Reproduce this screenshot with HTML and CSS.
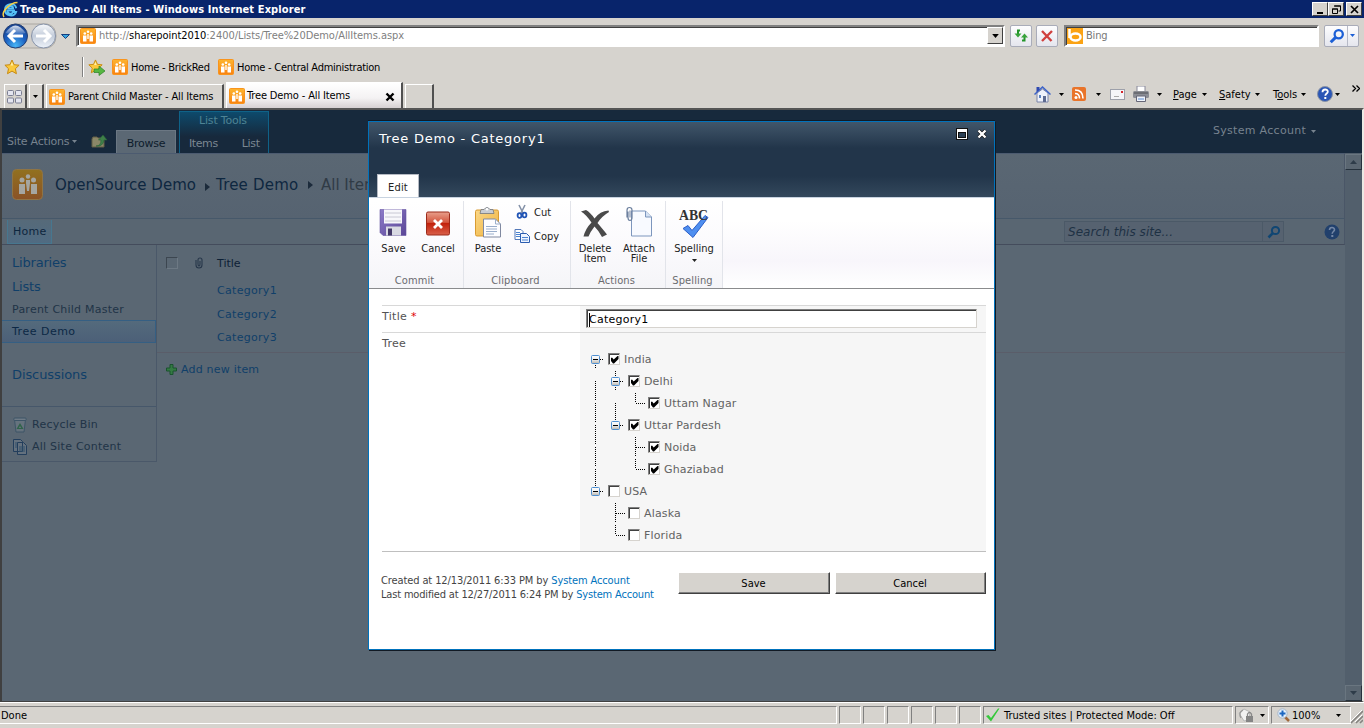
FILE: index.html
```html
<!DOCTYPE html>
<html lang="en">
<head>
<meta charset="utf-8">
<title>Tree Demo - All Items - Windows Internet Explorer</title>
<link rel="stylesheet" href="styles.css">
</head>
<body>
<svg class="defs" width="0" height="0" aria-hidden="true">
  <defs>
    <linearGradient id="orange" x1="0" y1="0" x2="0" y2="1"><stop offset="0" stop-color="#fdb52f"/><stop offset="1" stop-color="#f98210"/></linearGradient>
    <radialGradient id="blueBall" cx=".5" cy=".9" r=".9"><stop offset="0" stop-color="#48b5f5"/><stop offset=".5" stop-color="#1b5fc0"/><stop offset="1" stop-color="#16408e"/></radialGradient>
    <linearGradient id="gloss" x1="0" y1="0" x2="0" y2="1"><stop offset="0" stop-color="#fff" stop-opacity=".85"/><stop offset="1" stop-color="#fff" stop-opacity=".1"/></linearGradient>
    <linearGradient id="greyBall" x1="0" y1="0" x2="0" y2="1"><stop offset="0" stop-color="#f7f9fc"/><stop offset=".5" stop-color="#c3ccda"/><stop offset="1" stop-color="#eef3fa"/></linearGradient>
    <linearGradient id="floppy" x1="0" y1="0" x2="1" y2="1"><stop offset="0" stop-color="#8d7cc9"/><stop offset="1" stop-color="#5a4596"/></linearGradient>
    <linearGradient id="red" x1="0" y1="0" x2="0" y2="1"><stop offset="0" stop-color="#e8a08c"/><stop offset=".45" stop-color="#d4563f"/><stop offset=".5" stop-color="#c2210c"/><stop offset="1" stop-color="#d9604a"/></linearGradient>
    <linearGradient id="board" x1="0" y1="0" x2="1" y2="1"><stop offset="0" stop-color="#fbd888"/><stop offset="1" stop-color="#eeb23e"/></linearGradient>
    <linearGradient id="node" x1="0" y1="0" x2="0" y2="1"><stop offset="0" stop-color="#fff"/><stop offset=".5" stop-color="#eee"/><stop offset="1" stop-color="#b9b5ad"/></linearGradient>
    <symbol id="sp" viewBox="0 0 16 16">
      <rect x=".5" y=".5" width="15" height="15" rx="1" fill="url(#orange)" stroke="#f9941c"/>
      <g fill="#fff"><circle cx="8" cy="3.800" r="1.300"/><circle cx="4.800" cy="5.500" r="1.300"/><circle cx="11.200" cy="5.500" r="1.300"/><path d="M3 7.500h3.500v6H3zM9.500 7.500H13v6H9.500zM7.300 6h1.400v5H7.300z"/></g>
    </symbol>
    <symbol id="star" viewBox="0 0 16 16"><path d="M8 1l2.100 4.700 5 .5-3.700 3.500 1 5L8 12.100l-4.500 2.600 1-5L.9 6.200l5-.5z" fill="#fbc93c" stroke="#c88a10"/><path d="M8 3l1.200 3.500H6.500z" fill="#fff0a8"/></symbol>
    <symbol id="down" viewBox="0 0 5 3"><path d="M0 0h5L2.500 3z" fill="currentColor"/></symbol>
    <symbol id="cross" viewBox="0 0 10 10"><path d="M1.500 1.500l7 7M8.500 1.500l-7 7" stroke="currentColor" stroke-width="2.400"/></symbol>
    <symbol id="lens" viewBox="0 0 14 14"><circle cx="8.500" cy="5.500" r="3.600" fill="none" stroke="currentColor" stroke-width="2"/><path d="M5.800 8.200L1.500 12.500" stroke="currentColor" stroke-width="2.600"/></symbol>
    <symbol id="help" viewBox="0 0 16 16"><circle cx="8" cy="8" r="7.500" fill="#2b56b5" stroke="#8a93a5"/><path d="M5.500 6.200c0-3.600 5.300-3.400 5.300-.5 0 1.800-2.500 1.900-2.500 4" fill="none" stroke="#fff" stroke-width="1.800"/><rect x="7.300" y="11" width="2" height="2" fill="#fff"/></symbol>
    <symbol id="check" viewBox="0 0 8 8"><path d="M0 2l1-.5L2.700 3.500 6.500 0H7.500v3L3 7.500H2L0 5z" fill="#000"/></symbol>
    <symbol id="toggle" viewBox="0 0 20 22" overflow="visible"><path d="M14 11.500h4" class="dots"/><rect x="5.500" y="7.500" width="8" height="8" rx="1" fill="url(#node)" stroke="#4f8fd0"/><path d="M7 11.500h5" stroke="#000"/></symbol>
    <symbol id="tail" viewBox="0 0 20 22" overflow="visible"><path d="M9.500 17v4" class="dots"/></symbol>
    <symbol id="head" viewBox="0 0 20 22" overflow="visible"><path d="M9.500 1v6" class="dots"/></symbol>
    <symbol id="line" viewBox="0 0 20 22" overflow="visible"><path d="M9.500 11v19" class="dots"/></symbol>
    <symbol id="elbow" viewBox="0 0 20 22" overflow="visible"><path d="M9.500 1v10M10 11.500h9" class="dots"/></symbol>
    <symbol id="tee" viewBox="0 0 20 22" overflow="visible"><path d="M9.500 1v19M10 11.500h9" class="dots"/></symbol>
  </defs>
</svg>

<div class="window">
  <header class="titlebar">
    <svg class="ie" width="17" height="17" viewBox="0 0 17 17"><path d="M13 9.500H5.300c.3 3.800 4.500 4.300 5.800 1.500h3C12.500 16.200 2.800 15.600 3 8.500 3.200 2.200 13 1 14.200 7.200M5.400 7.400h5.700C11 4.200 5.700 4.400 5.400 7.400" fill="none" stroke="#56c0f7" stroke-width="1.900"/><path d="M2 16C-1.500 11 8 1.500 15.500 1.500" fill="none" stroke="#f8cf45" stroke-width="1.500"/></svg>
    <span class="caption">Tree Demo - All Items - Windows Internet Explorer</span>
    <span class="winbtns">
      <i class="winbtn"><svg width="9" height="9"><path d="M1 7h6v2H1z"/></svg></i><i class="winbtn"><svg width="10" height="9"><path d="M3.500 1h6v5h-2M3 1h7M1.500 4h5v4.500h-5zM1 4h6" fill="none" stroke="#000"/></svg></i><i class="winbtn close"><svg width="9" height="9"><path d="M1 1l7 7M8 1L1 8" stroke="#000" stroke-width="1.700"/></svg></i>
    </span>
  </header>

  <div class="addressbar">
    <svg class="nav" width="74" height="30" viewBox="0 0 74 30">
      <path d="M14 3h33q9 2 9 12t-9 12H14z" fill="#d2cfca" stroke="#aaa7a2"/>
      <circle cx="15.500" cy="15" r="12" fill="url(#blueBall)" stroke="#243f73"/><path d="M5.500 12Q15.500-3 25.500 12 15.500 15 5.500 12" fill="url(#gloss)"/>
      <path d="M15 9l-6 6 6 6M9.500 15H23" fill="none" stroke="#fff" stroke-width="3"/>
      <circle cx="43.500" cy="15" r="12" fill="url(#greyBall)" stroke="#8692a8"/><path d="M44 9l6 6-6 6M49.500 15H36" fill="none" stroke="#fff" stroke-width="3"/>
      <path d="M61.500 13.500h8l-4 4z" fill="#37a5e0" stroke="#153f80"/>
    </svg>
    <div class="field url"><svg width="16" height="16"><use href="#sp"/></svg><span class="ui urltext">http://<b>sharepoint2010</b>:2400/Lists/Tree%20Demo/AllItems.aspx</span><i class="dropbtn"><svg width="7" height="4"><use href="#down"/></svg></i></div>
    <i class="toolbtn"><svg width="16" height="16" viewBox="0 0 16 16"><path d="M7 2.500H5V6M9 12.500h2.500V9" stroke="#23952a" stroke-width="2" fill="none"/><path d="M1.500 5.500h7L5 9.500zM8 9.500h7l-3.500-4z" fill="#38a33c"/></svg></i>
    <i class="toolbtn stop"><svg width="14" height="14" viewBox="0 0 14 14"><path d="M2 2l9.500 10M12 2L2 12" stroke="#d0403e" stroke-width="2.400"/></svg></i>
    <div class="field bing"><svg width="16" height="16" viewBox="0 0 16 16"><path d="M0 0h16v16H0z" fill="#fba314"/><path d="M2.500 1v9" stroke="#fff" stroke-width="2.500"/><ellipse cx="8.500" cy="9" rx="5" ry="3.500" fill="none" stroke="#fff" stroke-width="2.500"/></svg><span class="ui">Bing</span></div>
    <i class="toolbtn go"><svg width="16" height="16"><use href="#lens"/></svg><b></b><svg width="5" height="3"><use href="#down"/></svg></i>
  </div>

  <div class="favbar ui">
    <svg width="16" height="16"><use href="#star"/></svg><span class="fav">Favorites</span><i class="sep"></i>
    <svg class="star2" width="18" height="17" viewBox="0 0 18 17"><use href="#star" width="15" height="15"/><path d="M6 10h5V7l6 5-6 4.500v-3H6z" fill="#57b742" stroke="#2d8126" stroke-width=".7"/></svg>
    <svg width="16" height="16"><use href="#sp"/></svg><span class="bk1">Home - BrickRed</span>
    <svg width="16" height="16"><use href="#sp"/></svg><span class="bk2">Home - Central Administration</span>
  </div>

  <div class="tabrow ui">
    <i class="tab quick"><svg width="16" height="14" viewBox="0 0 16 14"><g fill="#e4e5f0" stroke="#7b7e93"><rect x=".5" y=".5" width="6" height="5" rx="1"/><rect x="8.500" y=".5" width="6" height="5" rx="1"/><rect x=".5" y="8" width="6" height="5" rx="1"/><rect x="8.500" y="8" width="6" height="5" rx="1"/></g></svg></i>
    <i class="tab qdrop"><svg width="5" height="3"><use href="#down"/></svg></i>
    <div class="tab tab1"><svg width="16" height="16"><use href="#sp"/></svg><span>Parent Child Master - All Items</span></div>
    <div class="tab tab2"><svg width="16" height="16"><use href="#sp"/></svg><span>Tree Demo - All Items</span><svg class="tabclose" width="10" height="10"><use href="#cross"/></svg></div>
    <i class="tab newtab"></i>
    <div class="cmds">
      <svg width="17" height="17" viewBox="0 0 17 17"><path d="M3 7v9h11V7L8.500 3z" fill="#eef1fa" stroke="#7b84a8"/><path d="M.5 8.500L8.500 1l8 7.500" fill="none" stroke="#3d63c8" stroke-width="1.500"/><path d="M2.500 1h3v3l-3 2z" fill="#2f49b0"/><path d="M9 10h3v6H9z" fill="#5d6a90"/><path d="M5 9h2v3H5z" fill="#5b83c0"/></svg>
      <svg class="dd" width="5" height="3"><use href="#down"/></svg>
      <svg class="rss" width="14" height="14" viewBox="0 0 14 14"><rect width="14" height="14" rx="2" fill="#e9742a"/><circle cx="4" cy="10.500" r="1.500" fill="#fff"/><path d="M3 6.500q4.500 0 4.500 5M3 3q8 0 8 8.500" fill="none" stroke="#fff" stroke-width="1.600"/></svg>
      <svg class="dd2" width="5" height="3"><use href="#down"/></svg>
      <svg class="mail" width="15" height="11" viewBox="0 0 15 11"><rect x=".5" y=".5" width="14" height="10" fill="#f5f5f8" stroke="#9da0aa"/><rect x="11" y="2" width="2" height="2" fill="#d6252b"/><path d="M4 7.500h5" stroke="#aaa"/></svg>
      <svg class="print" width="16" height="16" viewBox="0 0 16 16"><path d="M4 0h8v6H4z" fill="#fff" stroke="#889"/><rect y="5" width="16" height="7" rx="1.500" fill="#8b8d94"/><path d="M1 7h14" stroke="#4c4e55"/><path d="M3.500 10h9v5.500h-9z" fill="#eef3fb" stroke="#667"/><path d="M5 13h6" stroke="#5b8ad0"/></svg>
      <svg class="dd3" width="5" height="3"><use href="#down"/></svg>
      <span class="page"><u>P</u>age</span><svg class="dd4" width="5" height="3"><use href="#down"/></svg>
      <span class="safety"><u>S</u>afety</span><svg class="dd4" width="5" height="3"><use href="#down"/></svg>
      <span class="tools">T<u>o</u>ols</span><svg class="dd4" width="5" height="3"><use href="#down"/></svg>
      <svg class="helpi" width="16" height="16"><use href="#help"/></svg><svg class="dd5" width="5" height="3"><use href="#down"/></svg>
      <svg class="more" width="8" height="7" viewBox="0 0 8 7"><path d="M.5.500l3 3-3 3M4.500.500l3 3-3 3" fill="none" stroke="#000" stroke-width="1.300"/></svg>
    </div>
  </div>

  <main class="viewport">
    <div class="ribbon">
      <span class="siteact">Site Actions</span><svg class="sadrop" width="5" height="3"><use href="#down"/></svg>
      <svg class="folder" width="17" height="15" viewBox="0 0 17 15"><path d="M1 5l1-2h4l1 1h6v9H1z" fill="#8b8768" stroke="#635f45"/><path d="M5 12q5 0 5-6H7.500L12 1l4 5h-3q-1 7-8 6" fill="#3f8049" stroke="#275f38" stroke-width=".6"/></svg>
      <div class="browse">Browse</div>
      <div class="listtools"><div class="lt">List Tools</div><div class="ltabs"><span>Items</span><span class="l2">List</span></div></div>
      <div class="account">System Account <svg width="5" height="3"><use href="#down"/></svg></div>
    </div>
    <div class="below">
      <div class="sheet">
        <div class="crumbs">
          <svg class="logo" width="31" height="31" viewBox="0 0 31 31"><rect x=".5" y=".5" width="30" height="30" rx="4" fill="url(#logoFill)" stroke="#8f7445"/><defs><linearGradient id="logoFill" x1="0" y1="0" x2="0" y2="1"><stop offset="0" stop-color="#92711f"/><stop offset="1" stop-color="#8a5226"/></linearGradient></defs><g fill="#a5a6a1"><circle cx="16" cy="7.500" r="2.200"/><circle cx="10" cy="11" r="2.500"/><circle cx="21.500" cy="11" r="2.500"/><path d="M7 15h6v10H7zM19 15h6v10h-6zM14 11h4v3l-1 8h-2l-1-8z"/></g></svg>
          <span class="c1">OpenSource Demo</span><i class="arr"></i><span class="c2">Tree Demo</span><i class="arr a2"></i><span class="c3">All Items</span>
        </div>
        <div class="topnav"><span class="home">Home</span>
          <div class="search"><em>Search this site...</em><i><svg width="14" height="14"><use href="#lens"/></svg></i></div>
          <svg class="sphelp" width="16" height="16" viewBox="0 0 16 16"><circle cx="8" cy="8" r="7.500" fill="#21406c"/><path d="M5.500 6c0-3.400 5-3.200 5-.3 0 1.700-2.300 1.900-2.300 4" fill="none" stroke="#7487a5" stroke-width="1.600"/><rect x="7.300" y="11" width="2" height="2" fill="#7487a5"/></svg>
        </div>
        <div class="content">
          <nav class="side">
            <span class="big">Libraries</span><span class="big">Lists</span><span class="sub s1">Parent Child Master</span><span class="sub sel">Tree Demo</span><span class="big disc">Discussions</span>
            <div class="bin">
              <span><svg width="14" height="16" viewBox="0 0 14 16"><path d="M1.500 2.500h11l-1.500 12.500h-8z" fill="#66737e" stroke="#3d5567"/><rect x=".8" y="1" width="12.400" height="2.500" rx="1" fill="#6f7b86" stroke="#3d5567"/><path d="M7 6l3.500 6h-7z" fill="#2f6349"/><path d="M7 9l1.300 2H5.700z" fill="#66737e"/></svg><b class="rb">Recycle Bin</b></span>
              <span><svg width="14" height="16" viewBox="0 0 14 16"><path d="M.5.500h7l2 2v10h-9zM4.500 3.500h6l3 3v9h-9z" fill="#64717e" stroke="#233e5c"/><path d="M6 8h6M6 10h6M6 12h6M2 4h2M2 6h2M2 8h2" stroke="#30506b"/></svg><b>All Site Content</b></span>
            </div>
          </nav>
          <section class="list">
            <div class="lhead"><i class="cb"></i><svg width="8" height="12" viewBox="0 0 8 12"><path d="M1 3v5q0 3 3 3t3-3V3q0-2-2-2T3 3v4q0 2 1 2t1-2V4" fill="none" stroke="#27374a" stroke-width="1.100"/></svg><span>Title</span></div>
            <div class="item">Category1</div><div class="item">Category2</div><div class="item">Category3</div>
            <div class="add"><svg width="11" height="11" viewBox="0 0 11 11"><path d="M4 .5h3V4h3.500v3H7v3.500H4V7H.5V4H4z" fill="#337a42" stroke="#1a532f"/></svg><span>Add new item</span></div>
          </section>
        </div>
      </div>
      <div class="scroll"><i><svg width="7" height="4" viewBox="0 0 7 4"><path d="M0 4h7L3.500 0z" fill="#2e3c49"/></svg></i><i><svg width="7" height="4" viewBox="0 0 7 4"><path d="M0 0h7L3.500 4z" fill="#2e3c49"/></svg></i></div>
    </div>
  </main>

  <footer class="status ui">
    <span class="cell done">Done</span><i class="cell sm"></i><i class="cell sm"></i><i class="cell sm"></i><i class="cell sm"></i><i class="cell sm"></i><i class="cell sm"></i>
    <span class="cell trusted"><svg width="15" height="14" viewBox="0 0 15 14"><path d="M1 8l2.500-1L6 10l7-9.500h1.500L6 13.500z" fill="#35c83a"/></svg><span>Trusted sites | Protected Mode: Off</span></span>
    <span class="cell lock"><svg width="16" height="15" viewBox="0 0 16 15"><path d="M1 5l5-4 6 3-1 8-5 1z" fill="#f2f2f2" stroke="#b6b6b6"/><path d="M5 2q-5 3-2 8" fill="none" stroke="#999" stroke-width="1.300"/><path d="M9.500 8V6q2-3 4 0v2" fill="none" stroke="#888" stroke-width="1.300"/><rect x="8" y="8" width="7" height="6" fill="#858585"/></svg><svg width="5" height="3"><use href="#down"/></svg></span>
    <span class="cell zoom"><svg width="13" height="14" viewBox="0 0 13 14"><path d="M8 9l4 4" stroke="#a0673a" stroke-width="2.500"/><circle cx="5.500" cy="5.500" r="4.700" fill="#e3effb" stroke="#a5b5c9"/><path d="M5.500 2.500v6M2.500 5.500h6" stroke="#1c66c0" stroke-width="2"/></svg><span>100%</span><svg class="zd" width="5" height="3"><use href="#down"/></svg></span>
    <svg class="grip" width="14" height="16" viewBox="0 0 14 16"><path d="M2 15L14 3M7 15l7-7M11 15l3-3" stroke="#858380" stroke-width="1.600"/><path d="M1 14L13 2M6 14l7-7" stroke="#fff"/></svg>
  </footer>
</div>

<div class="dialog">
  <div class="dhead">
    <div class="dtitle"><span>Tree Demo - Category1</span><svg class="max" width="12" height="12" viewBox="0 0 12 12"><rect x=".5" y=".5" width="11" height="11" fill="#fff" stroke="#111"/><rect x="2.500" y="4.500" width="7" height="5" fill="#2c4156" stroke="#111"/></svg><svg class="x" width="10" height="10" viewBox="0 0 10 10"><path d="M1.500 1.500l7 7M8.500 1.500l-7 7" stroke="#111" stroke-width="3.600"/><path d="M1.500 1.500l7 7M8.500 1.500l-7 7" stroke="#fff" stroke-width="2.400"/></svg></div>
    <div class="edit ui">Edit</div>
  </div>
  <div class="dribbon ui">
    <div class="group g1"><div class="btns">
      <div class="lb b1"><svg width="28" height="30" viewBox="0 0 28 30"><path d="M1 2h26v26H4l-3-3z" fill="url(#floppy)" stroke="#6754a3" stroke-width=".6"/><path d="M5 2h18v14H5z" fill="#f7f7fb"/><path d="M6 5.500h16M6 9.500h16M6 13.500h16" stroke="#c8c8d4"/><path d="M7 19h15v9H7z" fill="#d9dae3"/><path d="M9 21h4v7H9z" fill="#443a69"/></svg><span>Save</span></div>
      <div class="lb b2"><svg width="28" height="30" viewBox="0 0 28 30"><rect x="2.500" y="4.500" width="23" height="23" rx="1.500" fill="url(#red)" stroke="#9c2a1b"/><path d="M10 12.500l8 8M18 12.500l-8 8" stroke="#fff" stroke-width="2.800"/></svg><span>Cancel</span></div>
    </div><div class="gl">Commit</div></div>
    <div class="group g2"><div class="btns">
      <div class="lb b3"><svg width="28" height="32" viewBox="0 0 28 32"><rect x="1.500" y="3.500" width="23" height="26" rx="1.500" fill="url(#board)" stroke="#d99b31"/><path d="M7 3h3q3-4 6 0h3l1 4H6z" fill="#c9cdd3" stroke="#73777e" stroke-width=".8"/><circle cx="13" cy="2.800" r="1.200" fill="#fff"/><path d="M9.500 12.500h12l5 5v13h-17z" fill="#fdfdff" stroke="#8089a0"/><path d="M21.500 12.500v5h5M12 20h11M12 22.500h11M12 25h11M12 27.500h8" fill="none" stroke="#9aaecb"/></svg><span>Paste</span></div>
      <div class="smalls"><div class="sb"><svg width="16" height="16" viewBox="0 0 16 16"><path d="M5 1l4.500 9M11 1L6.500 10" stroke="#8592a8" stroke-width="1.600"/><ellipse cx="5.500" cy="11.500" rx="1.900" ry="2.400" fill="none" stroke="#2155b5" stroke-width="1.800"/><ellipse cx="10.500" cy="11" rx="1.900" ry="2.400" fill="none" stroke="#2155b5" stroke-width="1.800"/></svg><span>Cut</span></div>
      <div class="sb"><svg width="16" height="16" viewBox="0 0 16 16"><path d="M1 1.500h6l2 2v8H1z" fill="#fff" stroke="#5479b8"/><path d="M6.500 5.500h6l3 3v6h-9z" fill="#eef4ff" stroke="#2b5caf"/><path d="M2 4.500h4M2 6.500h4M2 8.500h4M8 9.500h6M8 12h6" stroke="#4c83d0"/></svg><span>Copy</span></div></div>
    </div><div class="gl">Clipboard</div></div>
    <div class="group g3"><div class="btns">
      <div class="lb b4"><svg width="30" height="32" viewBox="0 0 30 32"><path d="M1 5l5-1.500q4 2 8.500 8.500Q20 4.500 28.500 4l.5 1.500Q21.500 10 17.500 16.500q6 7 9.500 11.500l-5 2.500q-3-6-7.500-10.500-4 5-6 10H3.500q2-8 8-14Q6 8 1 5" fill="#4a4a4a"/></svg><span>Delete<br>Item</span></div>
      <div class="lb b5"><svg width="28" height="32" viewBox="0 0 28 32"><path d="M6.500 4.500h14l6 6v19h-20z" fill="#f8faff" stroke="#7d96bd"/><path d="M20.500 4.500v6h6" fill="#d5e2f4" stroke="#7d96bd"/><path d="M3 5v6q0 3 2 3t2-3V4q0-3-2.500-3T2 4v7" fill="none" stroke="#6b7f9d" stroke-width="1.200"/><path d="M5 4v7" stroke="#6b7f9d"/></svg><span>Attach<br>File</span></div>
    </div><div class="gl">Actions</div></div>
    <div class="group g4"><div class="btns">
      <div class="lb b6"><svg width="32" height="32" viewBox="0 0 32 32"><path d="M5 22l5-3 4 5L27 9l3 2-15 20z" fill="#4f8ff0" stroke="#2c5fc8"/><text x="1" y="13" class="abc" textLength="29" lengthAdjust="spacingAndGlyphs">ABC</text></svg><span>Spelling</span><svg class="sd" width="5" height="3"><use href="#down"/></svg></div>
    </div><div class="gl">Spelling</div></div>
  </div>
  <div class="form">
    <div class="frow r1"><label>Title <b>*</b></label><div class="fval"><div class="input"><i></i>Category1</div></div></div>
    <div class="frow r2"><label>Tree</label><div class="fval tree">
      <div class="n"><svg><use href="#toggle" width="20" height="22"/><use href="#tail" width="20" height="22"/></svg><i class="cb on"><svg width="8" height="8"><use href="#check"/></svg></i><span>India</span></div>
      <div class="n"><svg><use href="#line" width="20" height="22"/></svg><svg><use href="#head" width="20" height="22"/><use href="#tail" width="20" height="22"/><use href="#toggle" width="20" height="22"/></svg><i class="cb on"><svg width="8" height="8"><use href="#check"/></svg></i><span>Delhi</span></div>
      <div class="n"><svg><use href="#line" width="20" height="22"/></svg><svg><use href="#line" width="20" height="22"/></svg><svg><use href="#elbow" width="20" height="22"/></svg><i class="cb on"><svg width="8" height="8"><use href="#check"/></svg></i><span>Uttam Nagar</span></div>
      <div class="n"><svg><use href="#line" width="20" height="22"/></svg><svg><use href="#toggle" width="20" height="22"/></svg><i class="cb on"><svg width="8" height="8"><use href="#check"/></svg></i><span>Uttar Pardesh</span></div>
      <div class="n"><svg><use href="#line" width="20" height="22"/></svg><svg></svg><svg><use href="#tee" width="20" height="22"/></svg><i class="cb on"><svg width="8" height="8"><use href="#check"/></svg></i><span>Noida</span></div>
      <div class="n"><svg><use href="#line" width="20" height="22"/></svg><svg></svg><svg><use href="#elbow" width="20" height="22"/></svg><i class="cb on"><svg width="8" height="8"><use href="#check"/></svg></i><span>Ghaziabad</span></div>
      <div class="n"><svg><use href="#toggle" width="20" height="22"/></svg><i class="cb on"></i><span>USA</span></div>
      <div class="n"><svg></svg><svg><use href="#tee" width="20" height="22"/></svg><i class="cb on"></i><span>Alaska</span></div>
      <div class="n"><svg></svg><svg><use href="#elbow" width="20" height="22"/></svg><i class="cb on"></i><span>Florida</span></div>
    </div></div>
    <div class="ffoot ui">
      <div class="meta"><div class="m1">Created at 12/13/2011 6:33 PM by <a>System Account</a></div><div class="m2">Last modified at 12/27/2011 6:24 PM by <a>System Account</a></div></div>
      <button>Save</button><button class="cancel">Cancel</button>
    </div>
  </div>
</div>
</body>
</html>
```
FILE: styles.css
```css
* { box-sizing: border-box; }
body { margin: 0; width: 1364px; height: 728px; overflow: hidden; background: #d6d3ce; font: 11px/14px "DejaVu Sans", sans-serif; color: #000; }
svg { display: block; flex: none; }
i { font-style: normal; display: block; flex: none; }
span { white-space: nowrap; }
.defs { position: absolute; }
.ui { font-family: "DejaVu Sans Condensed", "DejaVu Sans", sans-serif; font-stretch: condensed; font-size: 11px; }
.dots { stroke: #000; stroke-dasharray: 1 1; fill: none; shape-rendering: crispEdges; }
.window { height: 728px; display: flex; flex-direction: column; }

.titlebar { height: 18px; flex: none; background: #08246b; color: #fff; display: flex; align-items: center; padding: 0 2px; }
.caption { margin-left: 1px; padding-top: 1px; font: bold 11px/16px "DejaVu Sans Condensed", "DejaVu Sans", sans-serif; font-stretch: condensed; flex: 1; letter-spacing: .11px; }
.winbtns { display: flex; }
.winbtn { width: 16px; height: 14px; background: #d6d3ce; border: 1px solid; border-color: #fff #404040 #404040 #fff; display: flex; align-items: center; justify-content: center; }
.winbtn.close { margin-left: 2px; }

.addressbar { height: 35px; flex: none; display: flex; align-items: center; }
.nav { margin-right: 2px; }
.field { height: 22px; background: #fff; border: 2px solid; border-color: #808080 #fff #fff #808080; box-shadow: inset 1px 1px #404040; display: flex; align-items: center; }
.url { width: 929px; padding: 0 0 0 2px; }
.urltext { margin-left: 3px; flex: 1; color: #808080; letter-spacing: -.04px; padding-top: 1px; }
.urltext b { font-weight: normal; color: #000; }
.dropbtn { width: 16px; height: 17px; background: #d6d3ce; border: 1px solid; border-color: #fff #404040 #404040 #fff; display: flex; align-items: center; justify-content: center; }
.toolbtn { width: 22px; height: 22px; margin-left: 5px; border: 1px solid #a9acb9; border-radius: 2px; background: linear-gradient(#fdfdfe, #e5e6ee); display: flex; align-items: center; justify-content: center; }
.stop { margin-left: 4px; }
.bing { width: 255px; margin-left: 6px; padding-left: 1px; color: #777; }
.bing span { margin-left: 3px; padding-top: 1px; letter-spacing: -.2px; }
.go { width: 35px; color: #1c5fd6; gap: 2px; }
.go b { width: 1px; height: 20px; background: #b7bac7; }

.favbar { height: 28px; flex: none; display: flex; align-items: center; padding-left: 4px; }
.fav { margin-left: 4px; width: 58px; letter-spacing: .1px; }
.sep { width: 2px; height: 20px; border-left: 1px solid #808080; border-right: 1px solid #fff; }
.star2 { margin: 0 6px 0 4px; }
.bk1, .bk2 { margin-left: 3px; letter-spacing: -.26px; padding-top: 1px; }
.bk1 { width: 87px; }

.tabrow { height: 27px; flex: none; display: flex; align-items: flex-end; padding-left: 4px; }
.tab { height: 24px; border: 1px solid #fff; border-right: 2px solid #505050; border-bottom: 0; display: flex; align-items: center; }
.quick { width: 23px; padding-left: 2px; }
.qdrop { width: 15px; margin-left: 2px; padding-left: 3px; }
.tab1 { width: 178px; margin-left: 2px; padding-left: 2px; }
.tab1 span, .tab2 span { margin-left: 3px; letter-spacing: -.14px; padding-top: 1px; }
.tab2 { height: 26px; width: 177px; margin-left: 2px; padding-left: 2px; background: linear-gradient(#fff, #f4f2f3 60%, #d6d0d2); }
.tab2 span { flex: 1; margin-left: 2px; }
.tabclose { margin: 2px 6px 0 0; }
.newtab { width: 29px; margin-left: 2px; }
.cmds { margin-left: 600px; height: 24px; padding-bottom: 4px; display: flex; align-items: center; }
.cmds span { padding-top: 1px; }
.dd { margin-left: 8px; } .rss { margin-left: 8px; } .dd2 { margin-left: 10px; } .mail { margin-left: 9px; } .print { margin-left: 8px; } .dd3 { margin-left: 8px; }
.page { margin-left: 11px; width: 26px; } .safety { margin-left: 12px; width: 33px; } .tools { margin-left: 13px; width: 25px; }
.dd4 { margin-left: 3px; } .helpi { margin-left: 11px; } .dd5 { margin-left: 2px; } .more { margin: 0 0 12px 12px; }

.viewport { height: 594px; flex: none; border: solid #404040; border-width: 2px 2px 1px; border-top-color: #555; border-right-color: #ece9e4; display: flex; flex-direction: column; background: #5a6773; overflow: hidden; }
.ribbon { height: 43px; flex: none; background: #17293c; display: flex; color: #77838f; padding-left: 5px; font-size: 11px; }
.siteact { margin-top: 25px; width: 61px; letter-spacing: -.2px; }
.sadrop { margin: 30px 0 0 4px; }
.folder { margin: 24px 0 0 14px; }
.browse { margin: 20px 0 -1px 8px; width: 60px; border: 1px solid #6b7783; border-bottom: 0; background: #5b6874; color: #0d1c2c; text-align: center; padding-top: 6px; height: 24px; letter-spacing: -.25px; }
.listtools { margin: 1px 0 0 3px; width: 90px; height: 42px; border: 1px solid #0f6288; border-bottom: 0; background: linear-gradient(#0d4a6c, #17293c 60%); color: #4e8495; }
.lt { text-align: center; margin-top: 2px; letter-spacing: -.2px; padding-right: 2px; }
.ltabs { display: flex; margin-top: 9px; color: #7b8792; padding-left: 9px; letter-spacing: -.4px; }
.l2 { margin-left: 24px; letter-spacing: -.3px; }
.account { margin: 14px 0 0 944px; height: 14px; display: flex; align-items: center; gap: 5px; white-space: nowrap; letter-spacing: .3px; }
.below { flex: 1; display: flex; min-height: 0; }
.sheet { width: 1343px; display: flex; flex-direction: column; }
.scroll { width: 17px; background: #525f6c; display: flex; flex-direction: column; justify-content: space-between; padding-top: 1px; }
.scroll i { height: 16px; background: #5a6671; border: 1px solid; border-color: #6a7680 #25313c #25313c #6a7680; display: flex; align-items: center; justify-content: center; }
.crumbs { height: 65px; flex: none; border-top: 1px solid #4c5b70; background: linear-gradient(#5a6773, #566371); border-right: 1px solid #4a5667; display: flex; padding: 15px 0 0 10px; font-size: 15px; line-height: 32px; color: #0e2740; }
.c1 { margin-left: 12px; width: 150px; }
.arr { width: 0; height: 0; border: 4px solid transparent; border-left: 5px solid #1c2b3b; border-right: 0; margin: 14px 6px 0 0; }
.c2 { width: 90px; letter-spacing: .2px; }
.a2 { margin: 12px 8px 0 2px; }
.c3 { color: #303b46; }
.topnav { height: 27px; flex: none; border-top: 1px solid #46586a; border-bottom: 1px solid #444c5c; border-right: 1px solid #4a5667; display: flex; background: #596672; }
.home { width: 45px; margin: 1px 0 0 5px; border: 1px solid #47778f; border-top: 0; background: linear-gradient(#566a79, #506b82); color: #0d263e; line-height: 23px; padding-left: 5px; letter-spacing: .25px; }
.search { margin: 2px 0 0 1012px; width: 220px; height: 21px; border: 1px solid #4b5967; display: flex; color: #1e3144; background: #566270; }
.search em { width: 198px; font-size: 12px; line-height: 20px; padding-left: 3px; letter-spacing: .05px; border-right: 1px solid #4b5967; }
.search i { color: #104673; padding: 3px 0 0 4px; }
.sphelp { margin: 5px 0 0 40px; }
.content { display: flex; flex: 1; align-items: flex-start; }
.side { width: 155px; height: 217px; border-right: 1px solid #4a5869; border-bottom: 1px solid #4a5869; display: flex; flex-direction: column; padding-top: 6px; color: #213447; }
.big { font-size: 13px; line-height: 24px; color: #103f69; padding-left: 10px; letter-spacing: -.2px; }
.sub { padding-left: 10px; letter-spacing: .24px; }
.s1 { line-height: 21px; }
.sel { height: 23px; line-height: 21px; border: 1px solid #355f83; border-left: 0; background: linear-gradient(#546a7c, #4c6078); color: #0c2845; letter-spacing: .5px; }
.disc { margin-top: 20px; letter-spacing: -.1px; }
.bin { margin-top: 19px; border-top: 1px solid #46576a; padding: 7px 0 0 11px; }
.bin span { display: flex; align-items: center; height: 22px; }
.bin b { font-weight: normal; margin-left: 5px; letter-spacing: .24px; }
.list { flex: 1; color: #103f69; }
.lhead { display: flex; align-items: center; padding: 9px 0 0 9px; height: 27px; color: #0d2136; }
.cb { width: 12px; height: 12px; border: 1px solid; border-color: #3c4650 #6d7984 #6d7984 #3c4650; }
.lhead svg { margin-left: 17px; } .lhead span { margin-left: 14px; padding-top: 1px; }
.item { padding-left: 60px; letter-spacing: .3px; line-height: 23.500px; }
.lhead + .item { padding-top: 7px; }
.add { display: flex; align-items: center; gap: 4px; border-top: 1px solid #5a5d69; margin-top: 2px; height: 35px; padding-left: 9px; letter-spacing: .2px; }

.status { height: 26px; display: flex; padding-top: 3px; align-items: flex-start; border-top: 1px solid #fff; }
.cell { height: 18px; border: 1px solid; border-color: #808080 #fff #fff #808080; display: flex; align-items: center; }
.cell span { padding-top: 1px; }
.done { width: 837px; border-left: 0; padding: 1px 0 0 1px; margin-right: 2px; }
.sm { width: 22px; margin-right: 2px; }
.trusted { width: 250px; padding-left: 1px; } .trusted span { margin-left: 4px; }
.lock { width: 34px; margin-left: 2px; padding-left: 2px; gap: 6px; }
.zoom { width: 80px; margin-left: 2px; padding-left: 5px; } .zoom span { margin-left: 2px; } .zd { margin-left: 16px; }
.grip { margin: 2px 0 0 -2px; }

.dialog { position: absolute; left: 368px; top: 121px; width: 627px; height: 529px; border: 1px solid #0072bc; background: #fff; box-shadow: 1px 1px 0 #111a24, 0 -1px 0 #111a24; color: #535353; }
.dhead { height: 75px; background: linear-gradient(#41566a, #22354a 26px, #22354a 54px, #33485c 75px); display: flex; flex-direction: column; justify-content: space-between; color: #fff; }
.dtitle { display: flex; font-size: 13px; line-height: 19px; padding: 7px 0 0 10px; height: 30px; }
.dtitle span { width: 577px; letter-spacing: .76px; }
.max { margin: -1px 10px 0 0; } .x { margin: 0 0 0 -1px; }
.edit { width: 42px; height: 23px; margin-left: 8px; background: #fff; border: 1px solid #b5bac3; border-bottom: 0; color: #222; line-height: 25px; text-align: center; letter-spacing: .15px; }
.dribbon { height: 92px; border-top: 1px solid #c8d3e0; border-bottom: 1px solid #8a8b8d; background: linear-gradient(#fff 25%, #f8f6fb 70%, #fff); display: flex; padding-top: 3px; color: #222; }
.group { border-right: 1px solid #e2e4ea; display: flex; flex-direction: column; justify-content: space-between; background: linear-gradient(#fff, #faf9fc 60%, #f5f5f8); }
.gl { text-align: center; color: #6b6b6f; line-height: 15px; padding-right: 3px; letter-spacing: .12px; }
.g1 { width: 95px; } .g2 { width: 107px; } .g3 { width: 95px; } .g4 { width: 57px; }
.btns { display: flex; height: 68px; padding-top: 5px; }
.lb { width: 44px; display: flex; flex-direction: column; align-items: center; line-height: 10px; text-align: center; }
.lb > svg:first-child { height: 33px; } .lb > span { margin-top: 5px; }
.b1 { margin-left: 2px; width: 45px; } .b3 { margin-left: 2px; } .b4 { margin-left: 2px; } .b6 { width: 56px; }
.b1 svg { margin-left: -2px; }
.smalls { margin: -6px 0 0 4px; } .sb { display: flex; align-items: center; gap: 4px; height: 24px; } .sb span { padding-top: 2px; }
.sd { margin-top: 5px; }
.abc { font: bold 15px "Liberation Serif", serif; fill: #333; }
.form { padding: 16px 8px 0 13px; }
.frow { display: flex; border-top: 1px solid #d8d8d8; }
.frow label { width: 198px; padding-top: 4px; letter-spacing: .3px; }
.frow label b { font-weight: normal; color: #e00000; }
.fval { flex: 1; background: #f6f6f6; }
.r1 { height: 27px; } .r2 { height: 220px; border-bottom: 1px solid #bfbfbf; }
.input { margin: 3px 0 0 6px; width: 391px; height: 19px; background: #fff; border: 1px solid; border-color: #808080 #d6d3ce #d6d3ce #808080; box-shadow: inset 1px 1px #404040; display: flex; align-items: center; color: #000; padding: 2px 0 0 2px; letter-spacing: .25px; }
.input i { width: 1px; height: 14px; margin-right: -1px; background: #000; }
.tree { padding: 15px 0 0 6px; }
.n { display: flex; height: 22px; align-items: center; color: #636363; }
.n > svg { width: 20px; height: 22px; overflow: visible; }
.n span { margin-left: 4px; padding-top: 1px; letter-spacing: .15px; }
.cb.on { margin-left: 2px; background: #fff; border-color: #808080 #d6d3ce #d6d3ce #808080; box-shadow: inset 1px 1px #404040; padding: 2px 0 0 2px; }
.ffoot { display: flex; padding-top: 20px; color: #444; }
.meta { width: 297px; margin-left: -1px; white-space: nowrap; padding-top: 2px; }
.m1 { letter-spacing: -.11px; } .m2 { letter-spacing: -.17px; }
.meta a { color: #0072bc; }
.ffoot button { width: 152px; height: 22px; font: inherit; background: #d6d3ce; border: 1px solid; border-color: #fff #404040 #404040 #fff; box-shadow: inset -1px -1px #808080; padding: 1px 1px 0 0; color: #000; flex: none; }
.ffoot .cancel { margin-left: 5px; width: 151px; }
```
